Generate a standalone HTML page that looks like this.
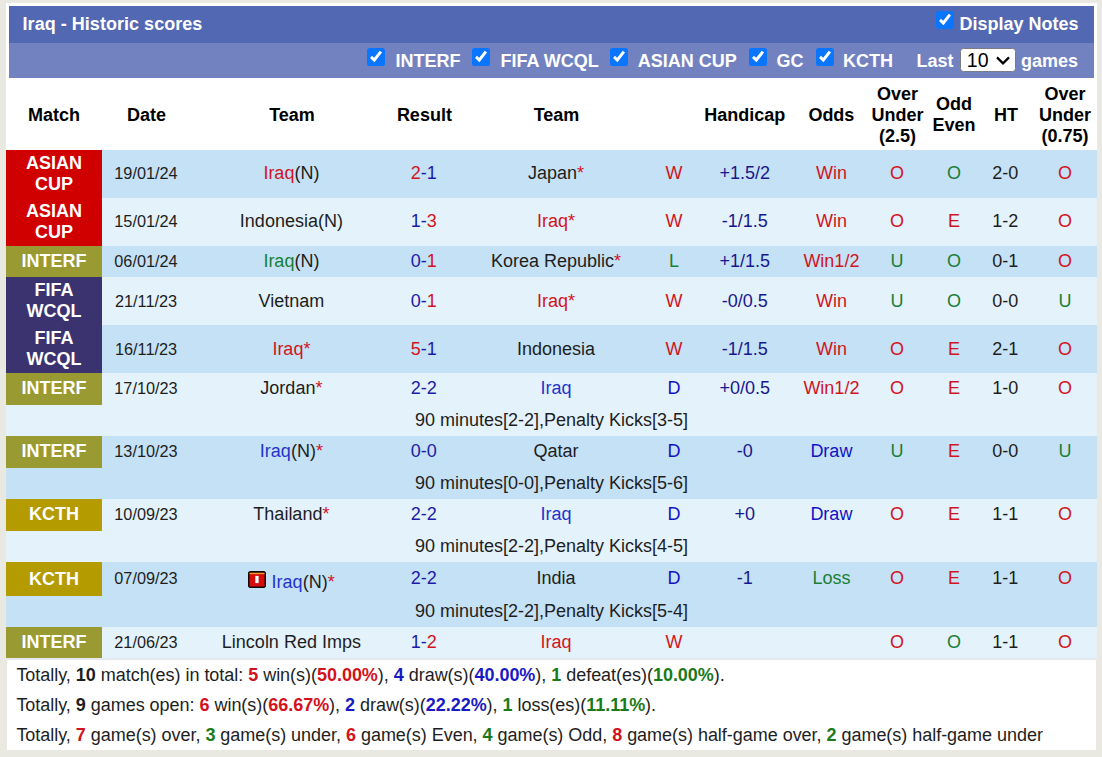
<!DOCTYPE html><html><head><meta charset="utf-8"><style>
*{box-sizing:border-box}
html,body{margin:0;padding:0}
body{width:1102px;height:757px;overflow:hidden;background:#e9e9e1;position:relative;font-family:"Liberation Sans",sans-serif;}
.ab{position:absolute}
#box{position:absolute;left:6px;top:3px;width:1091px;height:655px;background:#fff}
#fbox{position:absolute;left:7px;top:658px;width:1089px;height:92px;background:#fff}
.h1{position:absolute;left:9px;top:6px;width:1085px;height:36.5px;background:#5368b2}
.h2{position:absolute;left:9px;top:42.5px;width:1085px;height:35.5px;background:#7282c1}
.wt{position:absolute;color:#fff;font-weight:bold;font-size:18px;white-space:nowrap;line-height:21px}
.cb{position:absolute}
.sel{position:absolute;left:959.6px;top:47.6px;width:56.8px;height:24.6px;background:#fff;border:1px solid #7a7a88;border-radius:3.5px}
.th{position:absolute;font-weight:bold;font-size:18px;line-height:21px;color:#000;text-align:center;white-space:nowrap}
.row{position:absolute;left:6px;width:1091px}
.mc{position:absolute;left:0;top:0;width:96px;color:#fff;font-weight:bold;font-size:18px;line-height:21px;text-align:center;display:flex;align-items:center;justify-content:center}
.c{position:absolute;top:0;font-size:18px;color:#1e1e1e;text-align:center;white-space:nowrap;display:flex;align-items:center;justify-content:center}
.c.d{font-size:16.3px}
sup{color:#d2141e;font-size:13px;vertical-align:baseline;position:relative;top:-5px}
.note{position:absolute;left:0;width:1091px;font-size:18px;color:#1e1e1e;text-align:center;white-space:nowrap;display:flex;align-items:center;justify-content:center}
.rc{display:inline-block;width:18px;height:17px;vertical-align:0;margin-right:5.5px}
.foot{position:absolute;left:6px;top:660px;width:1091px}
.fl{position:absolute;left:10px;font-size:18px;letter-spacing:-0.03px;color:#1e1e1e;white-space:nowrap;line-height:30px;height:30px}
.fl b.r{color:#d4121c}.fl b.b{color:#1a1ac4}.fl b.g{color:#1a7a1a}
</style></head><body>
<div id="box"></div><div id="fbox"></div>
<div class="h1"></div><div class="h2"></div>

<div class="wt" style="left:22.6px;top:14px;letter-spacing:0.03px">Iraq - Historic scores</div>
<svg class="cb" style="left:936px;top:11px" width="18" height="18" viewBox="0 0 18 18"><rect x="0" y="0" width="18" height="18" rx="2.5" fill="#0a75ff"/><path d="M4.0,8.9 L7.3,12.0 L13.9,3.7" fill="none" stroke="#fff" stroke-width="2.9"/></svg>
<div class="wt" style="left:959.5px;top:14px">Display Notes</div>
<svg class="cb" style="left:367px;top:48px" width="18" height="18" viewBox="0 0 18 18"><rect x="0" y="0" width="18" height="18" rx="2.5" fill="#0a75ff"/><path d="M4.0,8.9 L7.3,12.0 L13.9,3.7" fill="none" stroke="#fff" stroke-width="2.9"/></svg>
<div class="wt" style="left:395.5px;top:51px">INTERF</div>
<svg class="cb" style="left:472px;top:48px" width="18" height="18" viewBox="0 0 18 18"><rect x="0" y="0" width="18" height="18" rx="2.5" fill="#0a75ff"/><path d="M4.0,8.9 L7.3,12.0 L13.9,3.7" fill="none" stroke="#fff" stroke-width="2.9"/></svg>
<div class="wt" style="left:500.5px;top:51px">FIFA WCQL</div>
<svg class="cb" style="left:610px;top:48px" width="18" height="18" viewBox="0 0 18 18"><rect x="0" y="0" width="18" height="18" rx="2.5" fill="#0a75ff"/><path d="M4.0,8.9 L7.3,12.0 L13.9,3.7" fill="none" stroke="#fff" stroke-width="2.9"/></svg>
<div class="wt" style="left:637.8px;top:51px">ASIAN CUP</div>
<svg class="cb" style="left:748.5px;top:48px" width="18" height="18" viewBox="0 0 18 18"><rect x="0" y="0" width="18" height="18" rx="2.5" fill="#0a75ff"/><path d="M4.0,8.9 L7.3,12.0 L13.9,3.7" fill="none" stroke="#fff" stroke-width="2.9"/></svg>
<div class="wt" style="left:776.5px;top:51px">GC</div>
<svg class="cb" style="left:815.5px;top:48px" width="18" height="18" viewBox="0 0 18 18"><rect x="0" y="0" width="18" height="18" rx="2.5" fill="#0a75ff"/><path d="M4.0,8.9 L7.3,12.0 L13.9,3.7" fill="none" stroke="#fff" stroke-width="2.9"/></svg>
<div class="wt" style="left:843px;top:51px">KCTH</div>
<div class="wt" style="left:916.5px;top:51px">Last</div>
<div class="sel"><span class="ab" style="left:6.2px;top:0px;font-size:19.5px;line-height:22px;color:#000">10</span><svg class="ab" style="left:35.5px;top:7px" width="14" height="10" viewBox="0 0 14 10"><path d="M1,1.4 L7,7.4 L13,1.4" fill="none" stroke="#000" stroke-width="2.2"/></svg></div>
<div class="wt" style="left:1021px;top:51px">games</div>
<div class="th" style="left:4px;width:100px;top:79px;height:72px;display:flex;align-items:center;justify-content:center">Match</div>
<div class="th" style="left:96.5px;width:100px;top:79px;height:72px;display:flex;align-items:center;justify-content:center">Date</div>
<div class="th" style="left:242px;width:100px;top:79px;height:72px;display:flex;align-items:center;justify-content:center">Team</div>
<div class="th" style="left:374.4px;width:100px;top:79px;height:72px;display:flex;align-items:center;justify-content:center">Result</div>
<div class="th" style="left:506.5px;width:100px;top:79px;height:72px;display:flex;align-items:center;justify-content:center">Team</div>
<div class="th" style="left:624px;width:100px;top:79px;height:72px;display:flex;align-items:center;justify-content:center"></div>
<div class="th" style="left:694.7px;width:100px;top:79px;height:72px;display:flex;align-items:center;justify-content:center">Handicap</div>
<div class="th" style="left:781.4px;width:100px;top:79px;height:72px;display:flex;align-items:center;justify-content:center">Odds</div>
<div class="th" style="left:847.5px;width:100px;top:79px;height:72px;display:flex;align-items:center;justify-content:center">Over<br>Under<br>(2.5)</div>
<div class="th" style="left:904px;width:100px;top:79px;height:72px;display:flex;align-items:center;justify-content:center">Odd<br>Even</div>
<div class="th" style="left:956px;width:100px;top:79px;height:72px;display:flex;align-items:center;justify-content:center">HT</div>
<div class="th" style="left:1015px;width:100px;top:79px;height:72px;display:flex;align-items:center;justify-content:center">Over<br>Under<br>(0.75)</div>
<div class="row" style="top:150px;height:48px;background:#c5e1f5">
<div class="mc" style="height:48px;background:#d00000">ASIAN<br>CUP</div>
<div class="c d" style="left:40px;top:-1px;width:200px;height:48px"><span>19/01/24</span></div>
<div class="c" style="left:185.39999999999998px;top:-1px;width:200px;height:48px"><span><span style="color:#d2141e">Iraq</span>(N)</span></div>
<div class="c" style="left:317.7px;top:-1px;width:200px;height:48px"><span><span style="color:#d2141e">2</span><span style="color:#1c1ca6">-1</span></span></div>
<div class="c" style="left:450px;top:-1px;width:200px;height:48px"><span>Japan<span style="color:#d2141e">*</span></span></div>
<div class="c" style="left:568px;top:-1px;width:200px;height:48px"><span><span style="color:#d2141e">W</span></span></div>
<div class="c" style="left:638.7px;top:-1px;width:200px;height:48px"><span><span style="color:#18188e">+1.5/2</span></span></div>
<div class="c" style="left:725.4px;top:-1px;width:200px;height:48px"><span><span style="color:#d2141e">Win</span></span></div>
<div class="c" style="left:791px;top:-1px;width:200px;height:48px"><span><span style="color:#d2141e">O</span></span></div>
<div class="c" style="left:848px;top:-1px;width:200px;height:48px"><span><span style="color:#1a7f34">O</span></span></div>
<div class="c" style="left:899.3px;top:-1px;width:200px;height:48px"><span>2-0</span></div>
<div class="c" style="left:959px;top:-1px;width:200px;height:48px"><span><span style="color:#d2141e">O</span></span></div>
</div>
<div class="row" style="top:198px;height:48px;background:#e4f2fb">
<div class="mc" style="height:48px;background:#d00000">ASIAN<br>CUP</div>
<div class="c d" style="left:40px;top:-1px;width:200px;height:48px"><span>15/01/24</span></div>
<div class="c" style="left:185.39999999999998px;top:-1px;width:200px;height:48px"><span>Indonesia(N)</span></div>
<div class="c" style="left:317.7px;top:-1px;width:200px;height:48px"><span><span style="color:#1c1ca6">1-</span><span style="color:#d2141e">3</span></span></div>
<div class="c" style="left:450px;top:-1px;width:200px;height:48px"><span><span style="color:#d2141e">Iraq*</span></span></div>
<div class="c" style="left:568px;top:-1px;width:200px;height:48px"><span><span style="color:#d2141e">W</span></span></div>
<div class="c" style="left:638.7px;top:-1px;width:200px;height:48px"><span><span style="color:#18188e">-1/1.5</span></span></div>
<div class="c" style="left:725.4px;top:-1px;width:200px;height:48px"><span><span style="color:#d2141e">Win</span></span></div>
<div class="c" style="left:791px;top:-1px;width:200px;height:48px"><span><span style="color:#d2141e">O</span></span></div>
<div class="c" style="left:848px;top:-1px;width:200px;height:48px"><span><span style="color:#d2141e">E</span></span></div>
<div class="c" style="left:899.3px;top:-1px;width:200px;height:48px"><span>1-2</span></div>
<div class="c" style="left:959px;top:-1px;width:200px;height:48px"><span><span style="color:#d2141e">O</span></span></div>
</div>
<div class="row" style="top:246px;height:31px;background:#c5e1f5">
<div class="mc" style="height:31px;background:#9a9a33">INTERF</div>
<div class="c d" style="left:40px;top:0px;width:200px;height:31px"><span>06/01/24</span></div>
<div class="c" style="left:185.39999999999998px;top:0px;width:200px;height:31px"><span><span style="color:#1a7f34">Iraq</span>(N)</span></div>
<div class="c" style="left:317.7px;top:0px;width:200px;height:31px"><span><span style="color:#1c1ca6">0-</span><span style="color:#d2141e">1</span></span></div>
<div class="c" style="left:450px;top:0px;width:200px;height:31px"><span>Korea Republic<span style="color:#d2141e">*</span></span></div>
<div class="c" style="left:568px;top:0px;width:200px;height:31px"><span><span style="color:#1a7f34">L</span></span></div>
<div class="c" style="left:638.7px;top:0px;width:200px;height:31px"><span><span style="color:#18188e">+1/1.5</span></span></div>
<div class="c" style="left:725.4px;top:0px;width:200px;height:31px"><span><span style="color:#d2141e">Win1/2</span></span></div>
<div class="c" style="left:791px;top:0px;width:200px;height:31px"><span><span style="color:#1a7f34">U</span></span></div>
<div class="c" style="left:848px;top:0px;width:200px;height:31px"><span><span style="color:#1a7f34">O</span></span></div>
<div class="c" style="left:899.3px;top:0px;width:200px;height:31px"><span>0-1</span></div>
<div class="c" style="left:959px;top:0px;width:200px;height:31px"><span><span style="color:#d2141e">O</span></span></div>
</div>
<div class="row" style="top:277px;height:48px;background:#e4f2fb">
<div class="mc" style="height:48px;background:#3b3370">FIFA<br>WCQL</div>
<div class="c d" style="left:40px;top:0px;width:200px;height:48px"><span>21/11/23</span></div>
<div class="c" style="left:185.39999999999998px;top:0px;width:200px;height:48px"><span>Vietnam</span></div>
<div class="c" style="left:317.7px;top:0px;width:200px;height:48px"><span><span style="color:#1c1ca6">0-</span><span style="color:#d2141e">1</span></span></div>
<div class="c" style="left:450px;top:0px;width:200px;height:48px"><span><span style="color:#d2141e">Iraq*</span></span></div>
<div class="c" style="left:568px;top:0px;width:200px;height:48px"><span><span style="color:#d2141e">W</span></span></div>
<div class="c" style="left:638.7px;top:0px;width:200px;height:48px"><span><span style="color:#18188e">-0/0.5</span></span></div>
<div class="c" style="left:725.4px;top:0px;width:200px;height:48px"><span><span style="color:#d2141e">Win</span></span></div>
<div class="c" style="left:791px;top:0px;width:200px;height:48px"><span><span style="color:#1a7f34">U</span></span></div>
<div class="c" style="left:848px;top:0px;width:200px;height:48px"><span><span style="color:#1a7f34">O</span></span></div>
<div class="c" style="left:899.3px;top:0px;width:200px;height:48px"><span>0-0</span></div>
<div class="c" style="left:959px;top:0px;width:200px;height:48px"><span><span style="color:#1a7f34">U</span></span></div>
</div>
<div class="row" style="top:325px;height:48px;background:#c5e1f5">
<div class="mc" style="height:48px;background:#3b3370">FIFA<br>WCQL</div>
<div class="c d" style="left:40px;top:0px;width:200px;height:48px"><span>16/11/23</span></div>
<div class="c" style="left:185.39999999999998px;top:0px;width:200px;height:48px"><span><span style="color:#d2141e">Iraq*</span></span></div>
<div class="c" style="left:317.7px;top:0px;width:200px;height:48px"><span><span style="color:#d2141e">5</span><span style="color:#1c1ca6">-1</span></span></div>
<div class="c" style="left:450px;top:0px;width:200px;height:48px"><span>Indonesia</span></div>
<div class="c" style="left:568px;top:0px;width:200px;height:48px"><span><span style="color:#d2141e">W</span></span></div>
<div class="c" style="left:638.7px;top:0px;width:200px;height:48px"><span><span style="color:#18188e">-1/1.5</span></span></div>
<div class="c" style="left:725.4px;top:0px;width:200px;height:48px"><span><span style="color:#d2141e">Win</span></span></div>
<div class="c" style="left:791px;top:0px;width:200px;height:48px"><span><span style="color:#d2141e">O</span></span></div>
<div class="c" style="left:848px;top:0px;width:200px;height:48px"><span><span style="color:#d2141e">E</span></span></div>
<div class="c" style="left:899.3px;top:0px;width:200px;height:48px"><span>2-1</span></div>
<div class="c" style="left:959px;top:0px;width:200px;height:48px"><span><span style="color:#d2141e">O</span></span></div>
</div>
<div class="row" style="top:373px;height:63.0px;background:#e4f2fb">
<div class="mc" style="height:31.5px;background:#9a9a33">INTERF</div>
<div class="c d" style="left:40px;top:0px;width:200px;height:31.5px"><span>17/10/23</span></div>
<div class="c" style="left:185.39999999999998px;top:0px;width:200px;height:31.5px"><span>Jordan<span style="color:#d2141e">*</span></span></div>
<div class="c" style="left:317.7px;top:0px;width:200px;height:31.5px"><span><span style="color:#1c1ca6">2-2</span></span></div>
<div class="c" style="left:450px;top:0px;width:200px;height:31.5px"><span><span style="color:#1f34cc">Iraq</span></span></div>
<div class="c" style="left:568px;top:0px;width:200px;height:31.5px"><span><span style="color:#1212c6">D</span></span></div>
<div class="c" style="left:638.7px;top:0px;width:200px;height:31.5px"><span><span style="color:#18188e">+0/0.5</span></span></div>
<div class="c" style="left:725.4px;top:0px;width:200px;height:31.5px"><span><span style="color:#d2141e">Win1/2</span></span></div>
<div class="c" style="left:791px;top:0px;width:200px;height:31.5px"><span><span style="color:#d2141e">O</span></span></div>
<div class="c" style="left:848px;top:0px;width:200px;height:31.5px"><span><span style="color:#d2141e">E</span></span></div>
<div class="c" style="left:899.3px;top:0px;width:200px;height:31.5px"><span>1-0</span></div>
<div class="c" style="left:959px;top:0px;width:200px;height:31.5px"><span><span style="color:#d2141e">O</span></span></div>
<div class="note" style="top:31.5px;height:31.5px">90 minutes[2-2],Penalty Kicks[3-5]</div>
</div>
<div class="row" style="top:436px;height:63.0px;background:#c5e1f5">
<div class="mc" style="height:31.5px;background:#9a9a33">INTERF</div>
<div class="c d" style="left:40px;top:0px;width:200px;height:31.5px"><span>13/10/23</span></div>
<div class="c" style="left:185.39999999999998px;top:0px;width:200px;height:31.5px"><span><span style="color:#1f34cc">Iraq</span>(N)<span style="color:#d2141e">*</span></span></div>
<div class="c" style="left:317.7px;top:0px;width:200px;height:31.5px"><span><span style="color:#1c1ca6">0-0</span></span></div>
<div class="c" style="left:450px;top:0px;width:200px;height:31.5px"><span>Qatar</span></div>
<div class="c" style="left:568px;top:0px;width:200px;height:31.5px"><span><span style="color:#1212c6">D</span></span></div>
<div class="c" style="left:638.7px;top:0px;width:200px;height:31.5px"><span><span style="color:#18188e">-0</span></span></div>
<div class="c" style="left:725.4px;top:0px;width:200px;height:31.5px"><span><span style="color:#1212c6">Draw</span></span></div>
<div class="c" style="left:791px;top:0px;width:200px;height:31.5px"><span><span style="color:#1a7f34">U</span></span></div>
<div class="c" style="left:848px;top:0px;width:200px;height:31.5px"><span><span style="color:#d2141e">E</span></span></div>
<div class="c" style="left:899.3px;top:0px;width:200px;height:31.5px"><span>0-0</span></div>
<div class="c" style="left:959px;top:0px;width:200px;height:31.5px"><span><span style="color:#1a7f34">U</span></span></div>
<div class="note" style="top:31.5px;height:31.5px">90 minutes[0-0],Penalty Kicks[5-6]</div>
</div>
<div class="row" style="top:499px;height:63.0px;background:#e4f2fb">
<div class="mc" style="height:31.5px;background:#b39b00">KCTH</div>
<div class="c d" style="left:40px;top:0px;width:200px;height:31.5px"><span>10/09/23</span></div>
<div class="c" style="left:185.39999999999998px;top:0px;width:200px;height:31.5px"><span>Thailand<span style="color:#d2141e">*</span></span></div>
<div class="c" style="left:317.7px;top:0px;width:200px;height:31.5px"><span><span style="color:#1c1ca6">2-2</span></span></div>
<div class="c" style="left:450px;top:0px;width:200px;height:31.5px"><span><span style="color:#1f34cc">Iraq</span></span></div>
<div class="c" style="left:568px;top:0px;width:200px;height:31.5px"><span><span style="color:#1212c6">D</span></span></div>
<div class="c" style="left:638.7px;top:0px;width:200px;height:31.5px"><span><span style="color:#18188e">+0</span></span></div>
<div class="c" style="left:725.4px;top:0px;width:200px;height:31.5px"><span><span style="color:#1212c6">Draw</span></span></div>
<div class="c" style="left:791px;top:0px;width:200px;height:31.5px"><span><span style="color:#d2141e">O</span></span></div>
<div class="c" style="left:848px;top:0px;width:200px;height:31.5px"><span><span style="color:#d2141e">E</span></span></div>
<div class="c" style="left:899.3px;top:0px;width:200px;height:31.5px"><span>1-1</span></div>
<div class="c" style="left:959px;top:0px;width:200px;height:31.5px"><span><span style="color:#d2141e">O</span></span></div>
<div class="note" style="top:31.5px;height:31.5px">90 minutes[2-2],Penalty Kicks[4-5]</div>
</div>
<div class="row" style="top:562px;height:65px;background:#c5e1f5">
<div class="mc" style="height:34px;background:#b39b00">KCTH</div>
<div class="c d" style="left:40px;top:-1px;width:200px;height:34px"><span>07/09/23</span></div>
<div class="c" style="left:185.39999999999998px;top:2.5px;width:200px;height:34px"><span><svg class="rc" width="18" height="17" viewBox="0 0 18 17"><polygon points="1.6,0 16.4,0 18,1.6 18,15.4 16.4,17 1.6,17 0,15.4 0,1.6" fill="#120a08"/><rect x="1.5" y="1.8" width="15" height="13.7" fill="#d60c0c"/><rect x="1.5" y="1.8" width="15" height="1.3" fill="#f0a030"/><rect x="7.3" y="4.9" width="3.3" height="7.2" fill="#fff"/></svg><span style="color:#1f34cc">Iraq</span>(N)<span style="color:#d2141e">*</span></span></div>
<div class="c" style="left:317.7px;top:-1px;width:200px;height:34px"><span><span style="color:#1c1ca6">2-2</span></span></div>
<div class="c" style="left:450px;top:-1px;width:200px;height:34px"><span>India</span></div>
<div class="c" style="left:568px;top:-1px;width:200px;height:34px"><span><span style="color:#1212c6">D</span></span></div>
<div class="c" style="left:638.7px;top:-1px;width:200px;height:34px"><span><span style="color:#18188e">-1</span></span></div>
<div class="c" style="left:725.4px;top:-1px;width:200px;height:34px"><span><span style="color:#1a7f34">Loss</span></span></div>
<div class="c" style="left:791px;top:-1px;width:200px;height:34px"><span><span style="color:#d2141e">O</span></span></div>
<div class="c" style="left:848px;top:-1px;width:200px;height:34px"><span><span style="color:#d2141e">E</span></span></div>
<div class="c" style="left:899.3px;top:-1px;width:200px;height:34px"><span>1-1</span></div>
<div class="c" style="left:959px;top:-1px;width:200px;height:34px"><span><span style="color:#d2141e">O</span></span></div>
<div class="note" style="top:34px;height:31px">90 minutes[2-2],Penalty Kicks[5-4]</div>
</div>
<div class="row" style="top:627px;height:31px;background:#e4f2fb">
<div class="mc" style="height:31px;background:#9a9a33">INTERF</div>
<div class="c d" style="left:40px;top:0px;width:200px;height:31px"><span>21/06/23</span></div>
<div class="c" style="left:185.39999999999998px;top:0px;width:200px;height:31px"><span>Lincoln Red Imps</span></div>
<div class="c" style="left:317.7px;top:0px;width:200px;height:31px"><span><span style="color:#1c1ca6">1-</span><span style="color:#d2141e">2</span></span></div>
<div class="c" style="left:450px;top:0px;width:200px;height:31px"><span><span style="color:#d2141e">Iraq</span></span></div>
<div class="c" style="left:568px;top:0px;width:200px;height:31px"><span><span style="color:#d2141e">W</span></span></div>
<div class="c" style="left:638.7px;top:0px;width:200px;height:31px"><span></span></div>
<div class="c" style="left:725.4px;top:0px;width:200px;height:31px"><span></span></div>
<div class="c" style="left:791px;top:0px;width:200px;height:31px"><span><span style="color:#d2141e">O</span></span></div>
<div class="c" style="left:848px;top:0px;width:200px;height:31px"><span><span style="color:#1a7f34">O</span></span></div>
<div class="c" style="left:899.3px;top:0px;width:200px;height:31px"><span>1-1</span></div>
<div class="c" style="left:959px;top:0px;width:200px;height:31px"><span><span style="color:#d2141e">O</span></span></div>
</div>
<div class="ab" style="left:7px;top:658px;width:1089px;height:1.5px;background:#e6e8f0"></div>
<div class="fl" style="top:660px;left:16.4px">Totally, <b>10</b> match(es) in total: <b class="r">5</b> win(s)(<b class="r">50.00%</b>), <b class="b">4</b> draw(s)(<b class="b">40.00%</b>), <b class="g">1</b> defeat(es)(<b class="g">10.00%</b>).</div>
<div class="fl" style="top:690px;left:16.4px">Totally, <b>9</b> games open: <b class="r">6</b> win(s)(<b class="r">66.67%</b>), <b class="b">2</b> draw(s)(<b class="b">22.22%</b>), <b class="g">1</b> loss(es)(<b class="g">11.11%</b>).</div>
<div class="fl" style="top:720px;left:16.4px">Totally, <b class="r">7</b> game(s) over, <b class="g">3</b> game(s) under, <b class="r">6</b> game(s) Even, <b class="g">4</b> game(s) Odd, <b class="r">8</b> game(s) half-game over, <b class="g">2</b> game(s) half-game under</div>
</body></html>
